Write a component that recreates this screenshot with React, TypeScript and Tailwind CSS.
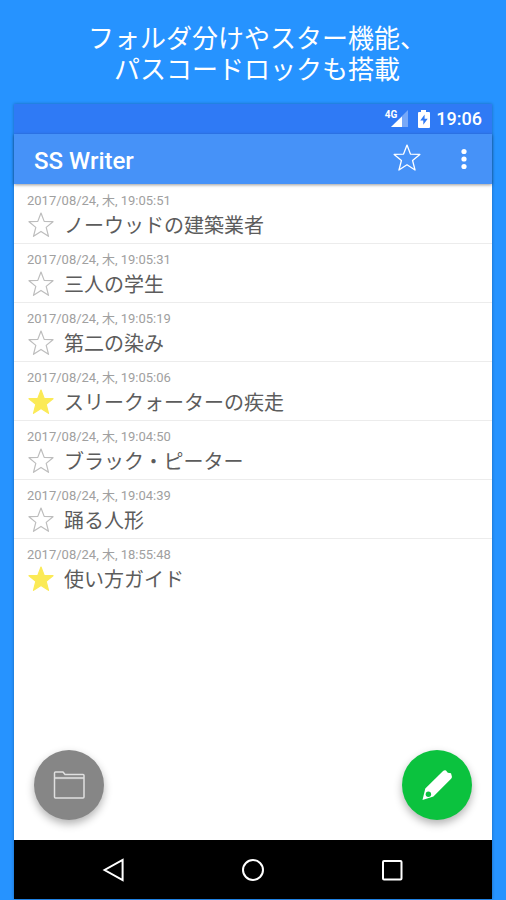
import React, { useState } from 'react';

interface Note {
  id: number;
  date: string;
  title: string;
  starred: boolean;
}

const initialNotes: Note[] = [
  { id: 1, date: '2017/08/24, 木, 19:05:51', title: 'ノーウッドの建築業者', starred: false },
  { id: 2, date: '2017/08/24, 木, 19:05:31', title: '三人の学生', starred: false },
  { id: 3, date: '2017/08/24, 木, 19:05:19', title: '第二の染み', starred: false },
  { id: 4, date: '2017/08/24, 木, 19:05:06', title: 'スリークォーターの疾走', starred: true },
  { id: 5, date: '2017/08/24, 木, 19:04:50', title: 'ブラック・ピーター', starred: false },
  { id: 6, date: '2017/08/24, 木, 19:04:39', title: '踊る人形', starred: false },
  { id: 7, date: '2017/08/24, 木, 18:55:48', title: '使い方ガイド', starred: true },
];

const StarIcon: React.FC<{ className: string }> = ({ className }) => (
  <svg viewBox="0 0 28 28" className={className} strokeWidth="1.2" strokeLinejoin="round" aria-hidden="true">
    <path d="M14 1l3.2 8.4 8.8.3-6.8 5.7 2.3 8.9-7.5-4.9-7.5 4.9 2.3-8.9L2 9.7l8.8-.3z" />
  </svg>
);

const StatusBar: React.FC = () => (
  <div className="flex h-[30px] items-center justify-end bg-[#2f7af5] pr-2.5 text-white">
    <div className="mr-2 flex h-5">
      <span className="-mr-2 text-[10px] leading-3 font-bold">4G</span>
      <svg viewBox="0 0 20 20" className="h-5 w-5" aria-hidden="true">
        <path d="M19 1v17H2z" fill="#fff" fillOpacity="0.35" />
        <path d="M13 7.5V18H2z" fill="#fff" />
      </svg>
    </div>
    <svg viewBox="0 0 14 20" className="mr-[5px] h-5 w-3.5" aria-hidden="true">
      <path d="M4 1h5v2h3q1 0 1 1v14q0 1-1 1H2q-1 0-1-1V4q0-1 1-1h2z" fill="#fff" />
      <path d="M7.6 5.5L3.3 11.6h3v4.2l4.4-6.1h-3.1z" fill="#2f7af5" />
    </svg>
    <span className="text-lg leading-6 font-medium">19:06</span>
  </div>
);

const AppBar: React.FC = () => (
  <header className="z-10 flex h-[50px] items-center bg-[#4692f8] pr-3.5 pl-5 text-white shadow-[0_1px_3px_rgba(0,0,0,0.4)]">
    <h1 className="flex-1 pt-1 text-2xl leading-8 font-medium">SS Writer</h1>
    <button type="button" aria-label="スター" className="mr-7">
      <StarIcon className="h-[30px] w-[30px] fill-none stroke-white" />
    </button>
    <button type="button" aria-label="メニュー" className="flex w-7 justify-center">
      <svg viewBox="0 0 6 22" className="h-[22px] w-1.5" fill="#fff" aria-hidden="true">
        <circle cx="3" cy="3.5" r="2.6" />
        <circle cx="3" cy="11" r="2.6" />
        <circle cx="3" cy="18.5" r="2.6" />
      </svg>
    </button>
  </header>
);

const NavBar: React.FC = () => (
  <nav className="flex h-[59px] items-center justify-center gap-[111px] bg-black">
    <button type="button" aria-label="戻る">
      <svg viewBox="0 0 28 28" className="h-7 w-7 fill-none stroke-white" strokeWidth="2" aria-hidden="true">
        <path d="M22.6 4v20L4.6 14z" />
      </svg>
    </button>
    <button type="button" aria-label="ホーム">
      <svg viewBox="0 0 28 28" className="h-7 w-7 fill-none stroke-white" strokeWidth="2" aria-hidden="true">
        <circle cx="14" cy="14" r="10" />
      </svg>
    </button>
    <button type="button" aria-label="履歴">
      <svg viewBox="0 0 28 28" className="h-7 w-7 fill-none stroke-white" strokeWidth="2" aria-hidden="true">
        <rect x="5" y="5" width="18.5" height="18.5" rx="1" />
      </svg>
    </button>
  </nav>
);

const App: React.FC = () => {
  const [notes, setNotes] = useState<Note[]>(initialNotes);

  const toggleStar = (id: number) => {
    setNotes((prev) => prev.map((n) => (n.id === id ? { ...n, starred: !n.starred } : n)));
  };

  return (
    <div className="flex min-h-screen flex-col bg-[#2693ff] px-3.5 pb-px font-['Roboto','Noto_Sans_CJK_JP',sans-serif]">
      {/* 見出し */}
      <p className="h-[104px] pt-6 pl-2 text-center text-[26px] leading-[31px] text-white">
        フォルダ分けやスター機能、
        <br />
        パスコードロックも搭載
      </p>

      <div className="flex flex-1 flex-col bg-white shadow-[0_0_3px_rgba(0,0,0,0.3)]">
        <StatusBar />
        <AppBar />

        {/* メモ一覧 */}
        <ul className="pt-px">
          {notes.map((note) => (
            <li key={note.id} className="h-[59px] border-b border-[#ececec] px-[13px] pt-2 last:border-b-0">
              <div className="text-[13px] leading-4 text-[#a0a0a0]">{note.date}</div>
              <div className="flex items-center">
                <button type="button" aria-label="スター" onClick={() => toggleStar(note.id)} className="mr-[9px]">
                  <StarIcon
                    className={note.starred ? 'h-7 w-7 fill-[#fbea56] stroke-[#fbea56]' : 'h-7 w-7 fill-none stroke-[#bdbdbd]'}
                  />
                </button>
                <span className="text-xl leading-[34px] text-[#5c5c5c]">{note.title}</span>
              </div>
            </li>
          ))}
        </ul>

        {/* フォルダ・新規作成ボタン */}
        <div className="mt-auto flex justify-between px-5 pb-5">
          <button
            type="button"
            aria-label="フォルダ"
            className="flex h-[70px] w-[70px] items-center justify-center rounded-full bg-[#868686] shadow-[0_4px_8px_rgba(0,0,0,0.3)]"
          >
            <svg viewBox="0 0 34 30" className="h-[30px] w-[34px] fill-none stroke-[#e0e0e0]" strokeWidth="1.5" strokeLinejoin="round" aria-hidden="true">
              <path d="M2.5 3q0-1 1-1h7.5l2 2.5H31q1 0 1 1V27q0 1-1 1H3.5q-1 0-1-1z" />
              <path d="M2.5 8h29.5" strokeWidth="2.2" strokeOpacity="0.8" />
            </svg>
          </button>
          <button
            type="button"
            aria-label="新規作成"
            className="flex h-[70px] w-[70px] items-center justify-center rounded-full bg-[#0bc23e] shadow-[0_4px_8px_rgba(0,0,0,0.3)]"
          >
            <svg viewBox="0 0 32 32" className="h-8 w-8" aria-hidden="true">
              <path d="M1.5 31l2.8-11.6L21.8 2.3q1.4-1.3 3.2-.8l1.8 2.2 3.2.6.9 3.2q.2 1.2-.8 2.2L12.4 27.4z" fill="#fff" />
              <circle cx="7.4" cy="25.2" r="2.7" fill="#0bc23e" />
            </svg>
          </button>
        </div>

        <NavBar />
      </div>
    </div>
  );
};

export default App;
